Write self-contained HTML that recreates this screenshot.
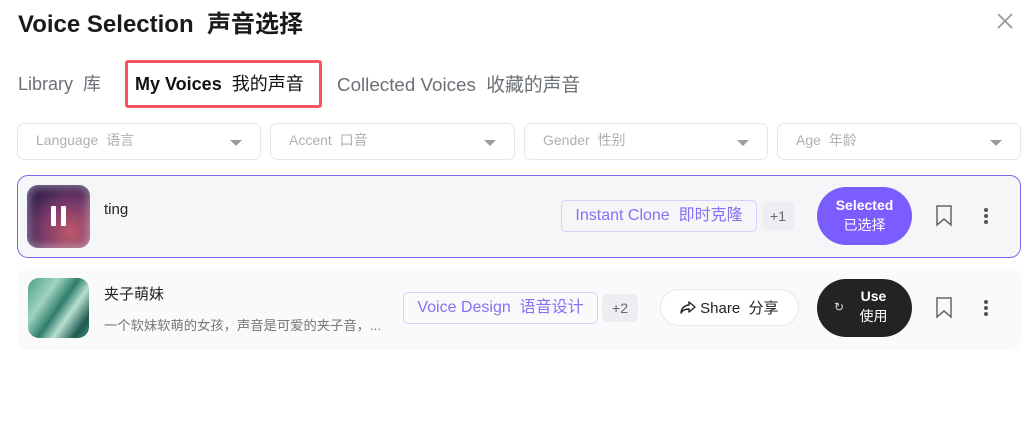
<!DOCTYPE html>
<html><head><meta charset="utf-8"><style>
*{box-sizing:border-box;margin:0;padding:0}
body{width:1028px;height:438px;background:#fff;font-family:"Liberation Sans","Noto Sans CJK SC",sans-serif;position:relative;overflow:hidden;color:#222}
.a{position:absolute;white-space:nowrap}
.dd{position:absolute;top:123px;height:37px;border:1px solid #e6e7ea;border-radius:7px;font-size:14px;color:#b0b0b4;padding-left:18px;line-height:33px}
.dd:after{content:"";position:absolute;right:18px;top:16px;border-left:6px solid transparent;border-right:6px solid transparent;border-top:6px solid #9a9ca0}
.tag{position:absolute;border:1px solid #d8ceff;border-radius:5px;color:#8a6ef5;font-size:16px;display:flex;align-items:center;justify-content:center;white-space:nowrap;line-height:1;padding-bottom:1px}
.plus{position:absolute;background:#eceef1;border-radius:6px;color:#666;font-size:14px;text-align:center;line-height:28px}
.btn{position:absolute;border-radius:30px;color:#fff;font-size:14px;font-weight:bold;text-align:center;line-height:20px}
</style></head><body>
<div class="a" style="left:18px;top:4px;font-size:24px;font-weight:bold;color:#1a1a1a">Voice Selection&nbsp; 声音选择</div>
<svg class="a" style="left:996px;top:12px" width="18" height="18" viewBox="0 0 18 18"><path d="M2 2L16 16M16 2L2 16" stroke="#999" stroke-width="1.8"/></svg>
<div class="a" style="left:18px;top:70px;font-size:18px;color:#6b6f76">Library&nbsp; 库</div>
<div class="a" style="left:125px;top:60px;width:197px;height:48px;border:3px solid #f5545a;border-radius:3px"></div>
<div class="a" style="left:135px;top:70px;font-size:18px;color:#111;font-weight:bold">My Voices&nbsp; <span style="font-weight:normal">我的声音</span></div>
<div class="a" style="left:337px;top:70px;font-size:18.8px;color:#6b6f76">Collected Voices&nbsp; 收藏的声音</div>
<div class="dd" style="left:17px;width:244px">Language&nbsp; 语言</div>
<div class="dd" style="left:270px;width:245px">Accent&nbsp; 口音</div>
<div class="dd" style="left:524px;width:244px">Gender&nbsp; 性别</div>
<div class="dd" style="left:777px;width:244px">Age&nbsp; 年龄</div>

<div class="a" style="left:17px;top:175px;width:1004px;height:83px;background:#f5f6f8;border:1px solid #7b66f0;border-radius:11px"></div>
<div class="a" style="left:27px;top:185px;width:63px;height:63px;border-radius:11px;background:radial-gradient(circle at 70% 75%,#c0586a 0%,#7a3a6a 45%,#3a2250 75%),#4a2a60;box-shadow:inset 0 0 8px 3px rgba(255,255,255,.35)"></div>
<div class="a" style="left:51px;top:206px;width:5px;height:20px;background:#fff;border-radius:1px"></div>
<div class="a" style="left:61px;top:206px;width:5px;height:20px;background:#fff;border-radius:1px"></div>
<div class="a" style="left:104px;top:201px;font-size:15px;color:#222">ting</div>
<div class="tag" style="left:561px;top:200px;width:196px;height:32px">Instant Clone&nbsp; 即时克隆</div>
<div class="plus" style="left:762px;top:202px;width:32px;height:28px">+1</div>
<div class="btn" style="left:817px;top:187px;width:95px;height:58px;background:#7b5cff;padding-top:8px">Selected<br><span style="font-weight:normal">已选择</span></div>
<svg class="a" style="left:935px;top:205px" width="18" height="22" viewBox="0 0 18 22"><path d="M2 1H16V20L9 14L2 20Z" fill="none" stroke="#666" stroke-width="1.5"/></svg>
<svg class="a" style="left:983px;top:207px" width="6" height="18"><circle cx="3" cy="3" r="2" fill="#555"/><circle cx="3" cy="9" r="2" fill="#555"/><circle cx="3" cy="15" r="2" fill="#555"/></svg>

<div class="a" style="left:17px;top:268px;width:1004px;height:82px;background:#fafafa;border-radius:11px"></div>
<div class="a" style="left:28px;top:278px;width:61px;height:60px;border-radius:11px;background:linear-gradient(125deg,#4aa08a 0%,#9fd4c0 30%,#2f7d6c 50%,#b9e0d0 65%,#1f5a50 85%,#3a8a78 100%)"></div>
<div class="a" style="left:104px;top:283px;font-size:15px;color:#222">夹子萌妹</div>
<div class="a" style="left:104px;top:315px;font-size:13.3px;color:#777">一个软妹软萌的女孩，声音是可爱的夹子音，...</div>
<div class="tag" style="left:403px;top:292px;width:195px;height:32px">Voice Design&nbsp; 语音设计</div>
<div class="plus" style="left:602px;top:294px;width:36px;height:28px">+2</div>
<div class="a" style="left:660px;top:289px;width:139px;height:37px;background:#fff;border:1px solid #e8e8ec;border-radius:20px;font-size:15px;color:#222;padding:7px 0 0 19px"><svg width="16" height="13" viewBox="0 0 16 13" style="vertical-align:-1px"><path d="M9 1L15 6L9 11V8C5 8 3 9 1 12C1.5 7 4 4.5 9 4Z" fill="none" stroke="#222" stroke-width="1.4" stroke-linejoin="round"/></svg> Share&nbsp; 分享</div>
<div class="btn" style="left:817px;top:279px;width:95px;height:58px;background:#232323;padding:7px 0 0 18px">Use<br><span style="font-weight:normal">使用</span></div>
<div class="a" style="left:834px;top:300px;font-size:12px;color:#ddd">↻</div>
<svg class="a" style="left:935px;top:297px" width="18" height="22" viewBox="0 0 18 22"><path d="M2 1H16V20L9 14L2 20Z" fill="none" stroke="#666" stroke-width="1.5"/></svg>
<svg class="a" style="left:983px;top:299px" width="6" height="18"><circle cx="3" cy="3" r="2" fill="#555"/><circle cx="3" cy="9" r="2" fill="#555"/><circle cx="3" cy="15" r="2" fill="#555"/></svg>
</body></html>
